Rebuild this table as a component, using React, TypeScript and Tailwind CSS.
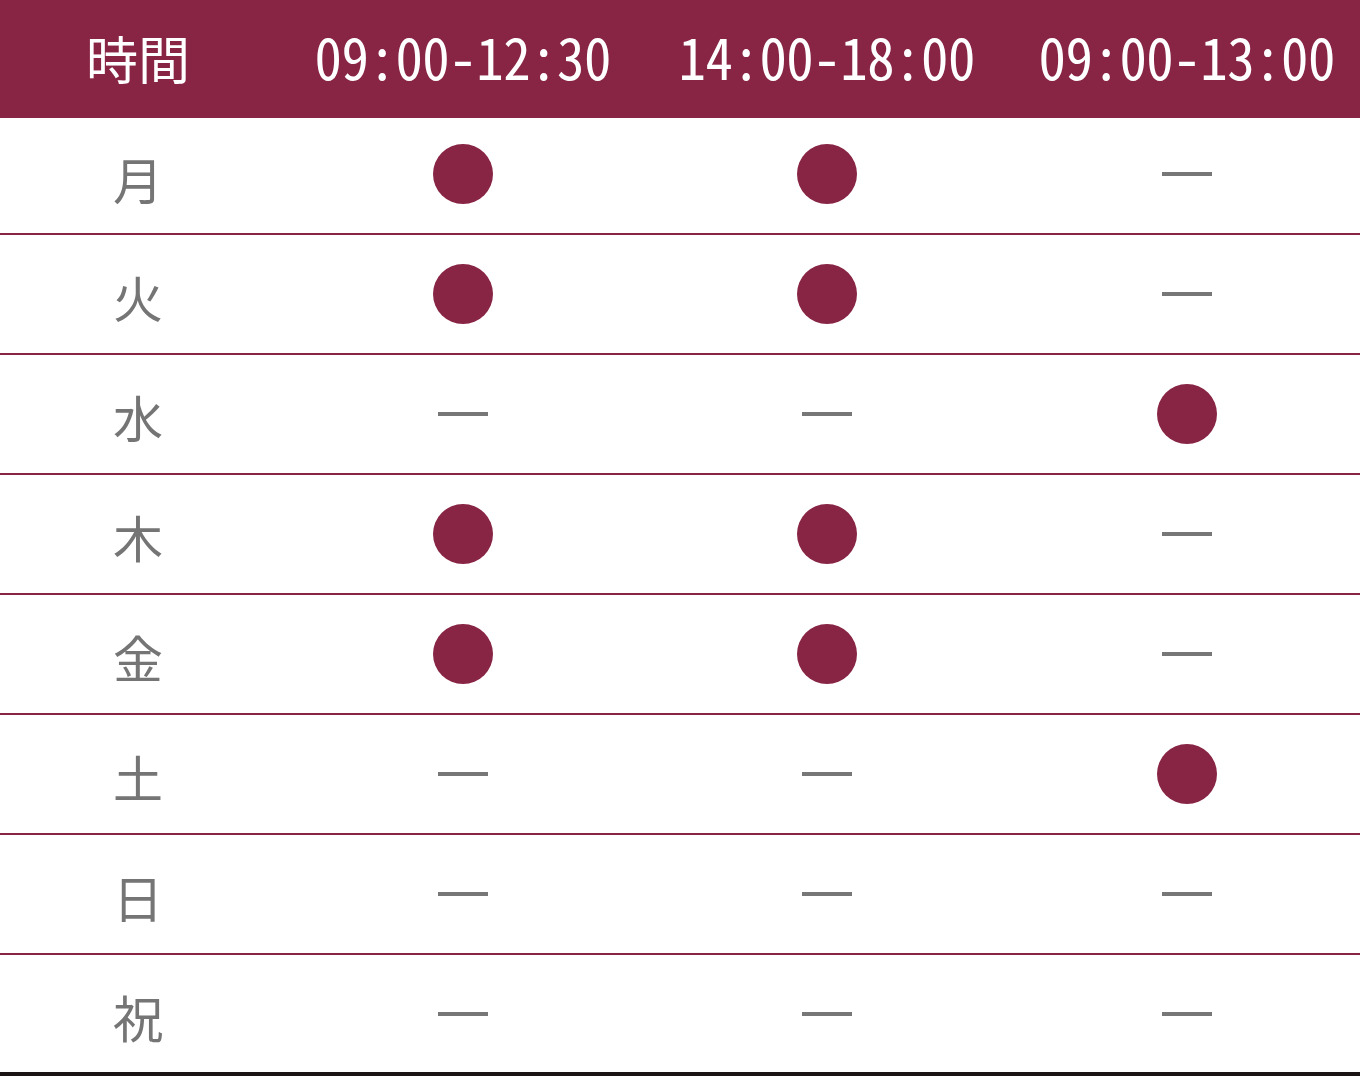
const days: { label: string; slots: boolean[] }[] = [
  { label: '月', slots: [true, true, false] },
  { label: '火', slots: [true, true, false] },
  { label: '水', slots: [false, false, true] },
  { label: '木', slots: [true, true, false] },
  { label: '金', slots: [true, true, false] },
  { label: '土', slots: [false, false, true] },
  { label: '日', slots: [false, false, false] },
  { label: '祝', slots: [false, false, false] },
];

const times = ['09:00-12:30', '14:00-18:00', '09:00-13:00'];

const cols = 'grid grid-cols-[276px_374px_354px_366px]';

function Mark({ open }: { open: boolean }) {
  return open ? (
    <div className="w-[60px] h-[60px] rounded-full bg-[#882444]" />
  ) : (
    <div className="w-[50px] h-[4px] bg-[#777777]" />
  );
}

export default function App() {
  return (
    <div className="w-[1360px] h-[1076px] overflow-hidden bg-white font-['Noto_Sans_CJK_JP',sans-serif]">
      <div className={`${cols} h-[118px] bg-[#882444] text-white items-center`}>
        <div className="flex justify-center text-[52px] leading-none pb-[2px]">時間</div>
        {times.map((t) => (
          <div key={t} className="flex justify-center pb-[8px]">
            <span className="inline-block text-[58px] leading-none tracking-[-0.5px] [font-feature-settings:'hwid'] scale-x-[0.945]">
              {t}
            </span>
          </div>
        ))}
      </div>
      {days.map((d, i) => (
        <div
          key={d.label}
          className={`${cols} items-center ${
            i === days.length - 1
              ? 'h-[121px] border-b-4 border-[#1c1515]'
              : i === 0
                ? 'h-[117px] border-b-2 border-[#882444]'
                : 'h-[120px] border-b-2 border-[#882444]'
          }`}
        >
          <div className="flex justify-center text-[50px] leading-none text-[#757575] pt-[4px]">{d.label}</div>
          {d.slots.map((open, j) => (
            <div key={j} className={`flex justify-center ${i === 0 ? 'pb-[3px]' : ''}`}>
              <Mark open={open} />
            </div>
          ))}
        </div>
      ))}
    </div>
  );
}
